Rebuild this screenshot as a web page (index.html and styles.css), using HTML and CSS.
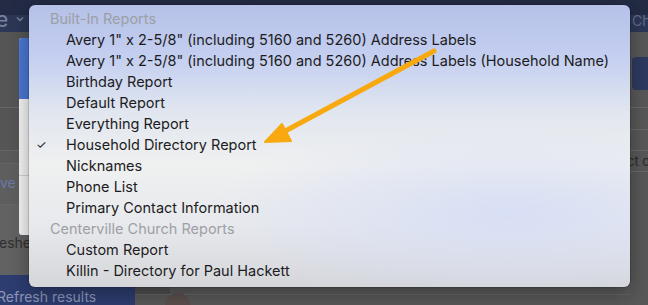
FILE: index.html
```html
<!DOCTYPE html>
<html lang="en">
<head>
  <meta charset="UTF-8" />
  <title>Reports</title>
  <meta name="viewport" content="width=device-width, initial-scale=1.0" />
  <link rel="stylesheet" href="styles.css">
</head>
<body>

  <div class="app">
    <div class="topbar">
      <div class="brand">e
        <svg class="caret" width="8" height="6" viewBox="0 0 8 6"><path d="M1 1.5 L4 4.5 L7 1.5" fill="none" stroke="#7b829c" stroke-width="1.4"/></svg>
      </div>
      <div class="church">Chu</div>
    </div>

    <div class="main">
      <div class="left">
        <div class="panel">
          <div class="strip">
            <div class="strip-row"></div>
            <div class="strip-row short"></div>
            <div class="strip-row save">ve</div>
            <div class="strip-row fresh">reshe</div>
          </div>
          <div class="card">
            <div class="card-top"></div>
            <div class="card-line"></div>
          </div>
        </div>
        <div class="sidebar">Refresh results</div>
      </div>

      <div class="content">
        <div class="avatar"></div>
      </div>

      <div class="right">
        <div class="btn"></div>
        <div class="rule"></div>
        <div class="rule"></div>
        <div class="rule text">ct co</div>
        <div class="rule"></div>
      </div>
    </div>

    <div class="menu">
      <div class="group">Built-In Reports</div>
      <div class="item">Avery 1" x 2-5/8" (including 5160 and 5260) Address Labels</div>
      <div class="item">Avery 1" x 2-5/8" (including 5160 and 5260) Address Labels (Household Name)</div>
      <div class="item">Birthday Report</div>
      <div class="item">Default Report</div>
      <div class="item">Everything Report</div>
      <div class="item checked">Household Directory Report</div>
      <div class="item">Nicknames</div>
      <div class="item">Phone List</div>
      <div class="item">Primary Contact Information</div>
      <div class="group">Centerville Church Reports</div>
      <div class="item">Custom Report</div>
      <div class="item">Killin - Directory for Paul Hackett</div>
    </div>

    <svg class="arrow" width="648" height="305" viewBox="0 0 648 305">
      <line x1="434" y1="51" x2="276" y2="136" stroke="#f7a90f" stroke-width="5" stroke-linecap="round"/>
      <polygon points="265,142 282,124 291,141" fill="#f7a90f" stroke="#f7a90f" stroke-width="2" stroke-linejoin="round"/>
    </svg>
  </div>

</body>
</html>
```

FILE: styles.css
```css
body {
  margin: 0;
  font-family: Inter, "Noto Sans", sans-serif;
  background: #585858;
}

.app {
  position: relative;
  width: 648px;
  height: 305px;
  overflow: hidden;
  display: flex;
  flex-direction: column;
}

.topbar {
  height: 40px;
  background: linear-gradient(#232b45 0, #232b45 15px, #2c3757 15px, #2c3757 40px);
  display: flex;
  justify-content: space-between;
  align-items: center;
  color: #7b829c;
  font-size: 15px;
}

.brand {
  display: flex;
  align-items: center;
  gap: 8px;
  margin-left: -4px;
  margin-top: 6px;
  font-size: 21px;
}

.church {
  margin-top: 8px;
  width: 16px;
  overflow: hidden;
  font-size: 14px;
  color: #646b88;
}

.main {
  flex: 1;
  display: flex;
}

.left {
  width: 135px;
  display: flex;
  flex-direction: column;
}

.panel {
  height: 243px;
  flex: none;
  display: flex;
  background: #555555;
}

.strip {
  width: 19px;
  display: flex;
  flex-direction: column;
  padding-top: 75px;
}

.strip-row {
  height: 42px;
  border-top: 1px solid #666;
  flex: none;
}

.strip-row.short {
  height: 12px;
  background: #5a5a5a;
}

.strip-row.save {
  height: 40px;
  color: #6a7aa6;
  font-size: 14px;
  line-height: 38px;
  background: #5e5e5e;
}

.strip-row.fresh {
  height: 72px;
  color: #2e2e2e;
  font-size: 14px;
  line-height: 76px;
  background: #626262;
  margin-left: -6px;
  width: 40px;
}

.card {
  flex: 1;
  margin-top: 6px;
  height: 197px;
  background: #f4f4f4;
  border-radius: 3px;
}

.card-top {
  height: 61px;
  background: #4a78d4;
  border-radius: 3px 3px 0 0;
}

.card-line {
  margin-top: 76px;
  border-top: 1px solid #d2d2d2;
}

.sidebar {
  flex: 1;
  background: #2d3d70;
  color: #8e97b8;
  font-size: 14px;
  padding: 13px 0 0 0;
  margin-left: -3px;
  white-space: nowrap;
}

.content {
  flex: 1;
  display: flex;
  align-items: flex-end;
  background: linear-gradient(90deg, #4f4f4f 0, #4f4f4f 35px, #5a5a5a 35px);
  border-bottom: 10px solid #585858;
  box-shadow: inset 0 -1px 0 #656565;
}

.avatar {
  width: 26px;
  height: 26px;
  border-radius: 50%;
  background: #5a4f4d;
  margin: 0 0 -24px 30px;
}

.right {
  width: 18px;
  display: flex;
  flex-direction: column;
  padding-top: 25px;
}

.btn {
  height: 33px;
  flex: none;
  background: #2e3a60;
  border-radius: 4px 0 0 4px;
  margin-left: 2px;
}

.rule {
  height: 21px;
  flex: none;
  border-top: 1px solid #6a6a6a;
  margin-top: 17px;
  font-size: 13px;
  color: #2a2a2a;
}

.rule + .rule {
  margin-top: 0;
  height: 20px;
}

.rule.text {
  line-height: 20px;
  margin-left: -3px;
  white-space: nowrap;
}

.menu {
  position: absolute;
  left: 29px;
  top: 5px;
  width: 601px;
  height: 282px;
  box-sizing: border-box;
  padding-top: 3px;
  border-radius: 6px;
  background:
    radial-gradient(ellipse 300px 90px at 480px 210px, rgba(214, 222, 246, 0.9), rgba(214, 222, 246, 0)),
    linear-gradient(#b5c1e7 0, #c3cef0 50px, #e2e7ef 110px, #eff0f0 160px, #e8e9ed 220px, #d5d6da 282px);
  box-shadow: 0 0 0 0.5px rgba(0, 0, 0, 0.25), 0 6px 20px rgba(0, 0, 0, 0.35);
  font-size: 14.5px;
  line-height: 21px;
  color: #1c1c22;
  white-space: nowrap;
}

.group {
  padding-left: 21px;
  color: #9d9fa5;
}

.item {
  padding-left: 37px;
  position: relative;
}

.checked::before {
  content: "\2713";
  position: absolute;
  left: 7px;
  font-size: 12px;
}

.arrow {
  position: absolute;
  left: 0;
  top: 0;
}
```
